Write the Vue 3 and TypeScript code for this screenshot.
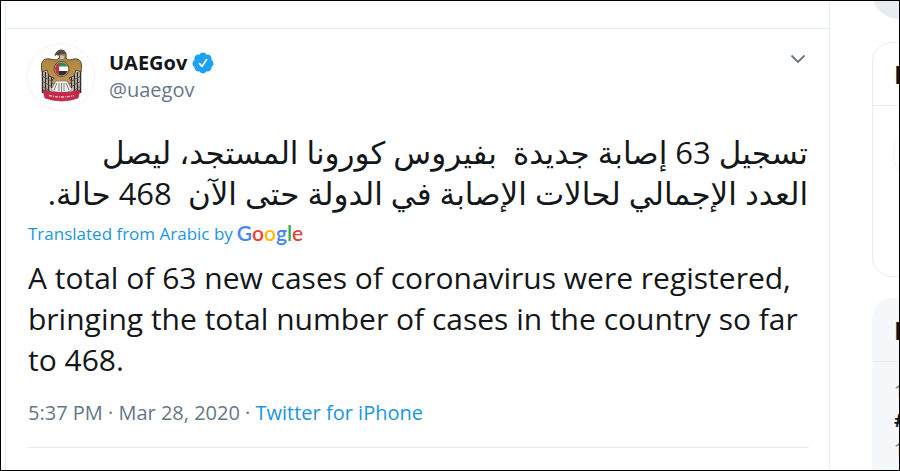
<script setup lang="ts">
interface Letter {
  char: string
  tone: 'blue' | 'red' | 'yellow' | 'green'
}

const author = { name: 'UAEGov', handle: '@uaegov' }
const original =
  'تسجيل 63 إصابة جديدة  بفيروس كورونا المستجد، ليصل\nالعدد الإجمالي لحالات الإصابة في الدولة حتى الآن  468 حالة.'
const translation =
  'A total of 63 new cases of coronavirus were registered, bringing the total number of cases in the country so far to 468.'
const translator: Letter[] = [
  { char: 'G', tone: 'blue' },
  { char: 'o', tone: 'red' },
  { char: 'o', tone: 'yellow' },
  { char: 'g', tone: 'blue' },
  { char: 'l', tone: 'green' },
  { char: 'e', tone: 'red' },
]
</script>

<template>
  <div class="page">
    <main class="timeline">
      <div class="topbar"></div>
      <article class="tweet">
        <header class="author">
          <a class="avatar" href="#" aria-label="UAEGov profile">
            <svg viewBox="0 0 66 66" aria-hidden="true">
              <defs>
                <linearGradient id="gold" x1="0" y1="0" x2="0" y2="1">
                  <stop offset="0" stop-color="#8f774c" />
                  <stop offset="0.4" stop-color="#b08a40" />
                  <stop offset="1" stop-color="#c0975a" />
                </linearGradient>
                <clipPath id="disc"><circle cx="33.500" cy="25" r="6.500" /></clipPath>
              </defs>
              <path d="M14 24V49L20 52L27 44V27Z M53 24V49L47 52L40 44V27Z" fill="#d8d3ca" />
              <path d="M14.500 25V49 M17.500 28V48 M20.500 30V47 M23.500 32V44 M52.500 25V49 M49.500 28V48 M46.500 30V47 M43.500 32V44" stroke="#2c2724" stroke-width="1.500" fill="none" />
              <path d="M14 32L25 38 M14 37L24 43 M14 42L22 47 M53 32L42 38 M53 37L43 43 M53 42L45 47" stroke="#5a5149" stroke-width="0.900" />
              <path d="M29 11 C27 9 30 6 33 6 C38 6 39 11 38 14 C41 18 45 14 49 15 C54 16 54 21 53 28 L48 26 L46 32 L41 34 L44 38 L39 42 H28 L23 38 L26 34 L21 32 L19 26 L14 28 C13 21 13 16 18 15 C23 14 28 18 31 14 L32 11Z" fill="url(#gold)" stroke="#4e3d24" stroke-width="0.900" />
              <path d="M26.500 12.500C27 8 30 6 33 6C36 6 37.500 8 37.500 10L34 10L31 11L29 10.500Z" fill="#4f4d48" />
              <path d="M32 11L36.500 12L35.500 15L32 15Z" fill="#c9c4b8" />
              <circle cx="33.500" cy="25" r="7.500" fill="#c9b5a3" stroke="#7c3d30" />
              <g clip-path="url(#disc)">
                <path d="M26 18h15v5H26z" fill="#2f8b5c" />
                <path d="M26 22.500h15v5H26z" fill="#fff" />
                <path d="M26 27h15v6H26z" fill="#342e2d" />
                <path d="M26 18h5v14h-5z" fill="#c83040" />
              </g>
              <path d="M28 37H39L44 46L38 49H29L23 46Z" fill="#f1f1f1" stroke="#77716a" stroke-width="0.600" />
              <path d="M29 39L26 46 M31 39V47 M33.500 39V48 M36 39V47 M38 39L41 46" stroke="#77736e" stroke-width="0.900" />
              <path d="M15 46Q34 51 52 46L50 54Q34 60 17 54Z" fill="#cb2547" stroke="#8f2840" stroke-width="0.700" />
              <path d="M21 51.500Q34 54.500 46 51.500" fill="none" stroke="#f2c5cd" stroke-width="1.400" stroke-dasharray="3 1 1 1" />
            </svg>
          </a>
          <div class="names">
            <a class="name" href="#">
              {{ author.name }}
              <svg class="badge" viewBox="0 0 24 24" role="img" aria-label="Verified account">
                <path fill="#1da1f2" d="M22.500 12.500c0-1.580-.875-2.950-2.148-3.600.154-.435.238-.905.238-1.400 0-2.210-1.710-3.998-3.818-3.998-.470 0-.920.084-1.336.250C14.818 2.415 13.510 1.500 12 1.500s-2.816.917-3.437 2.250c-.415-.165-.866-.250-1.336-.250-2.110 0-3.818 1.790-3.818 4 0 .494.083.964.237 1.400-1.272.650-2.147 2.018-2.147 3.600 0 1.495.782 2.798 1.942 3.486-.020.170-.032.340-.032.514 0 2.210 1.708 4 3.818 4 .470 0 .920-.086 1.335-.250.620 1.334 1.926 2.250 3.437 2.250 1.512 0 2.818-.916 3.437-2.250.415.163.865.248 1.336.248 2.110 0 3.818-1.790 3.818-4 0-.174-.012-.344-.033-.513 1.158-.687 1.943-1.990 1.943-3.484z" />
                <path fill="none" stroke="#fff" stroke-width="1.700" stroke-linecap="round" stroke-linejoin="round" d="M8.500 12.700l2.600 2.600 4.500-6.700" />
              </svg>
            </a>
            <a class="handle" href="#">{{ author.handle }}</a>
          </div>
          <button class="more" type="button" aria-label="More">
            <svg viewBox="0 0 16 10" aria-hidden="true">
              <path d="M1.500 1.500L8 8l6.500-6.500" fill="none" stroke="#657786" stroke-width="1.800" />
            </svg>
          </button>
        </header>

        <div class="content">
          <p class="original" lang="ar" dir="rtl">{{ original }}</p>
          <a class="credit" href="#">
            <span>Translated from Arabic by</span>
            <span class="google"><span v-for="(l, i) in translator" :key="i" :class="l.tone">{{ l.char }}</span></span>
          </a>
          <p class="translation">{{ translation }}</p>
          <footer class="meta">5:37 PM · Mar 28, 2020 · <a href="#">Twitter for iPhone</a></footer>
        </div>
      </article>
    </main>

    <aside class="sidebar">
      <div class="search"></div>
      <section class="card people">
        <h2>Relevant people</h2>
        <div class="person"></div>
      </section>
      <section class="card trends">
        <h2>Local trends</h2>
        <div class="trend">
          <span>1 · Trending</span>
          <b>#COVID19</b>
          <span>1M Tweets</span>
        </div>
      </section>
    </aside>
  </div>
</template>

<style>
body {
  background: #fff;
}
</style>

<style scoped>
.page {
  box-sizing: border-box;
  display: grid;
  grid-template-columns: minmax(0, 1fr) 27px;
  column-gap: 42px;
  height: 100vh;
  padding-left: 4px;
  border: 1px solid #000;
  overflow: hidden;
  color: #14171a;
  font-family: "Open Sans", "Noto Sans", sans-serif;
}

a {
  color: #1b95e0;
  text-decoration: none;
}

p,
h2 {
  margin: 0;
}

.timeline {
  border: solid #e6ecf0;
  border-width: 0 1px;
}

.topbar {
  height: 27px;
  border-bottom: 1px solid #e6ecf0;
}

.tweet {
  margin: 0 20px 0 21px;
  padding-top: 14px;
  border-bottom: 1px solid #e6ecf0;
}

.author {
  display: flex;
  align-items: flex-start;
  gap: 14px;
  height: 66px;
}

.avatar {
  box-sizing: border-box;
  width: 68px;
  height: 68px;
  border: 1px solid #f1f3f4;
  border-radius: 50%;
}

.avatar svg {
  display: block;
}

.names {
  flex: 1;
  display: flex;
  flex-direction: column;
  padding-top: 6px;
  font-size: 20px;
  line-height: 27px;
}

.name {
  display: flex;
  align-items: center;
  gap: 4px;
  color: #14171a;
  font-weight: 700;
}

.badge {
  width: 24px;
  height: 24px;
}

.handle {
  color: #657786;
}

.more {
  margin-top: 11px;
  padding: 0 3px;
  border: 0;
  background: none;
  line-height: 0;
}

.more svg {
  width: 16px;
  height: 10px;
}

.content {
  padding: 23px 1px 0;
}

.original,
.translation {
  font-size: 30px;
  line-height: 41px;
}

.original {
  font-family: "Open Sans", "DejaVu Sans", sans-serif;
  font-size: 31px;
  white-space: pre-wrap;
}

.credit {
  display: flex;
  align-items: center;
  gap: 4px;
  height: 39px;
  margin-bottom: 4px;
  font-size: 17px;
}

.google {
  padding-bottom: 2px;
  font-family: Lato, sans-serif;
  font-size: 21px;
  font-weight: 600;
}

.blue {
  color: #4285f4;
}

.red {
  color: #ea4335;
}

.yellow {
  color: #fbbc05;
}

.green {
  color: #34a853;
}

.meta {
  padding: 20px 0 21px;
  color: #657786;
  font-size: 20px;
  line-height: 26px;
}

.sidebar {
  min-width: 0;
  overflow: hidden;
}

.search {
  width: 400px;
  height: 54px;
  margin-top: -36px;
  border-radius: 27px;
  background: #e6ecf0;
}

.card {
  box-sizing: border-box;
  width: 400px;
  border: 1px solid #e6ecf0;
  border-radius: 20px;
}

.card h2 {
  padding: 17px 21px;
  border-bottom: 1px solid #e6ecf0;
  font-size: 25px;
  line-height: 28px;
}

.people {
  height: 235px;
  margin-top: 23px;
}

.person {
  width: 66px;
  height: 66px;
  margin: 14px 20px;
  border: 1px solid #f1f3f4;
  border-radius: 50%;
}

.trends {
  height: 400px;
  margin-top: 21px;
  border-color: #f5f8fa;
  background: #f5f8fa;
}

.trend {
  display: flex;
  flex-direction: column;
  padding: 15px 21px;
  color: #657786;
  font-size: 18px;
  line-height: 29px;
}

.trend b {
  color: #14171a;
}
</style>
